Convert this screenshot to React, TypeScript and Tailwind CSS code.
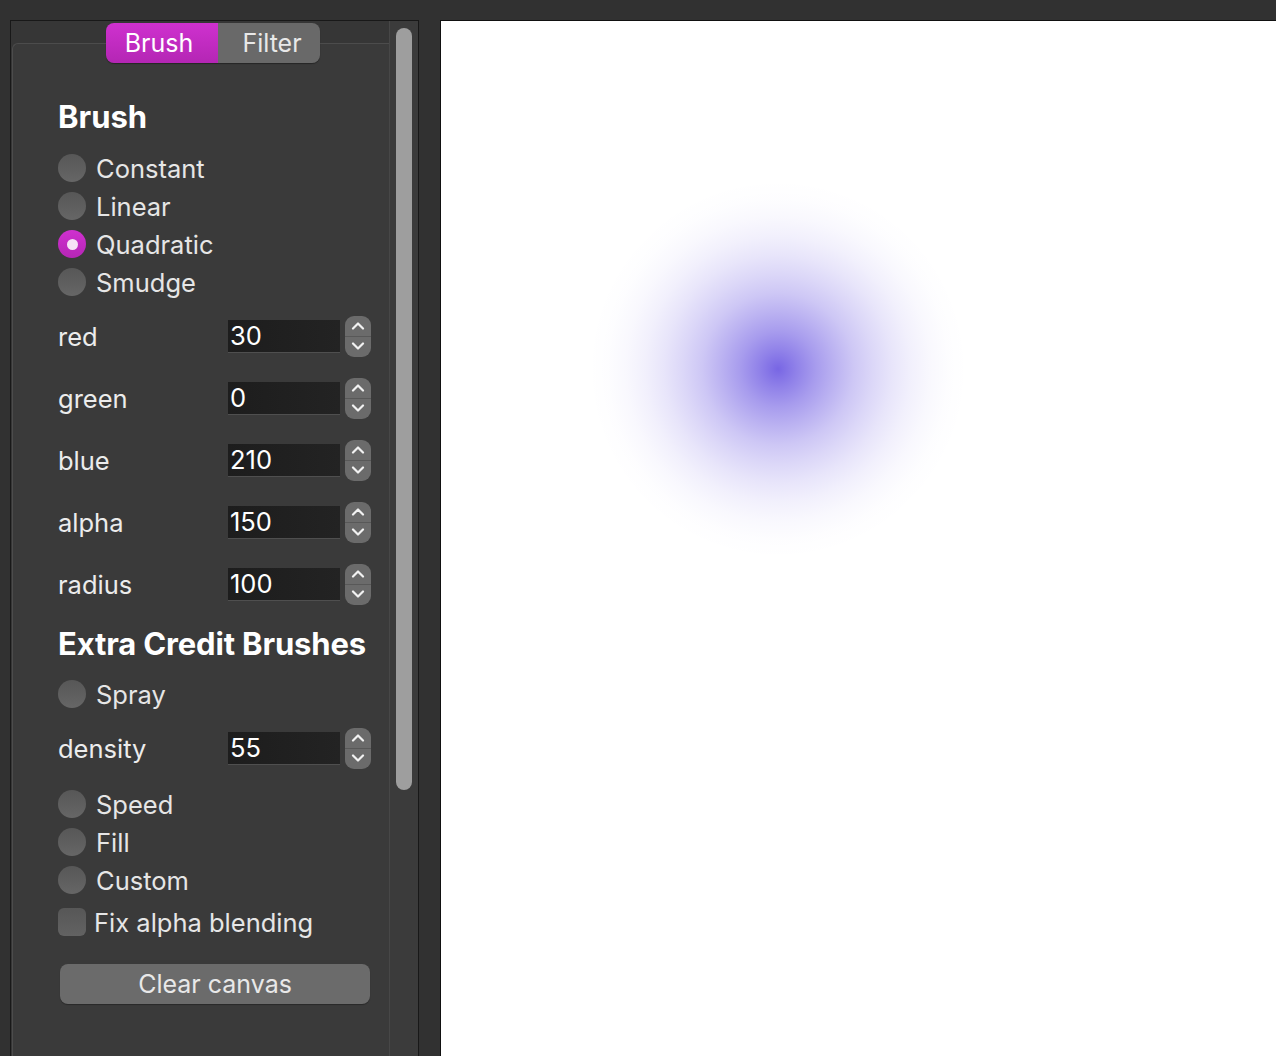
import React from 'react';

const ChevronUp = () => (
  <svg width="14" height="9" viewBox="0 0 14 9" fill="none">
    <path d="M2 7.5L7 2.5l5 5" stroke="#f2f2f2" strokeWidth="2.2" strokeLinecap="round" strokeLinejoin="round" />
  </svg>
);

const ChevronDown = () => (
  <svg width="14" height="9" viewBox="0 0 14 9" fill="none">
    <path d="M2 1.5L7 6.5l5-5" stroke="#f2f2f2" strokeWidth="2.2" strokeLinecap="round" strokeLinejoin="round" />
  </svg>
);

const Radio = ({ label, checked = false }: { label: string; checked?: boolean }) => (
  <div className="flex h-[38px] items-center gap-[10px]">
    {checked ? (
      <span className="flex h-[28px] w-[28px] items-center justify-center rounded-full bg-gradient-to-b from-[#cf30cf] to-[#b526b5]">
        <span className="h-[11px] w-[11px] rounded-full bg-[#f6e2f6]" />
      </span>
    ) : (
      <span className="h-[28px] w-[28px] rounded-full bg-gradient-to-b from-[#575757] to-[#666666]" />
    )}
    <span className="pt-[2px] text-[25.5px] text-[#e6e6e6]">{label}</span>
  </div>
);

const SpinRow = ({ label, value }: { label: string; value: string }) => (
  <div className="flex h-[42px] items-center">
    <span className="w-[170px] pt-[2px] text-[25.5px] text-[#ececec]">{label}</span>
    <div className="flex h-[33px] w-[112px] items-center border-b border-[#4f4f4f] bg-gradient-to-r from-[#1d1d1d] to-[#232323] pl-[2px] pt-[2px] text-[25.5px] text-white">
      {value}
    </div>
    <div className="ml-[5px] flex h-[41px] w-[26px] flex-col overflow-hidden rounded-[9px] bg-[#6b6b6b]">
      <div className="flex flex-1 items-center justify-center border-b border-[#585858]">
        <ChevronUp />
      </div>
      <div className="flex flex-1 items-center justify-center">
        <ChevronDown />
      </div>
    </div>
  </div>
);

const App = () => {
  return (
    <div className="flex h-[1056px] w-full overflow-hidden bg-[#313131] pt-[20px] font-['Inter','Noto_Sans',sans-serif]">
      {/* side panel */}
      <div className="relative ml-[10px] flex h-[1036px] w-[409px] border-x border-t border-[#181818] bg-[#363636]">
        <div className="absolute left-[95px] top-[2px] z-10 flex h-[40px] overflow-hidden rounded-[8px] text-[25px] shadow-[0_1px_1px_rgba(0,0,0,0.35)]">
          <div className="flex w-[112px] items-center justify-center bg-gradient-to-b from-[#cf31cf] to-[#b426b4] pr-[6px] pt-[1px] text-white">
            Brush
          </div>
          <div className="flex w-[102px] items-center justify-center bg-[#696969] pl-[6px] pt-[1px] text-[#e8e8e8]">
            Filter
          </div>
        </div>

        <div className="flex flex-1 flex-col pl-[1px] pt-[22px]">
          <div className="flex flex-1 flex-col rounded-tl-[6px] border-l border-t border-[#4c4c4c] bg-[#3a3a3a] pl-[45px] pt-[55px]">
            <h2 className="h-[36px] text-[31px] font-bold leading-[36px] text-white">Brush</h2>
            <div className="mt-[14px] flex flex-col">
              <Radio label="Constant" />
              <Radio label="Linear" />
              <Radio label="Quadratic" checked />
              <Radio label="Smudge" />
            </div>
            <div className="mt-[14px] flex flex-col gap-[20px]">
              <SpinRow label="red" value="30" />
              <SpinRow label="green" value="0" />
              <SpinRow label="blue" value="210" />
              <SpinRow label="alpha" value="150" />
              <SpinRow label="radius" value="100" />
            </div>
            <h2 className="mt-[21px] h-[36px] whitespace-nowrap text-[31px] font-bold leading-[36px] tracking-[-0.15px] text-white">
              Extra Credit Brushes
            </h2>
            <div className="mt-[13px]">
              <Radio label="Spray" />
            </div>
            <div className="mt-[14px]">
              <SpinRow label="density" value="55" />
            </div>
            <div className="mt-[16px] flex flex-col">
              <Radio label="Speed" />
              <Radio label="Fill" />
              <Radio label="Custom" />
            </div>
            <div className="mt-[4px] flex h-[38px] items-center gap-[8px]">
              <span className="h-[28px] w-[28px] rounded-[6px] bg-gradient-to-b from-[#575757] to-[#626262]" />
              <span className="pt-[2px] text-[25.5px] text-[#e6e6e6]">Fix alpha blending</span>
            </div>
            <button className="ml-[2px] mt-[23px] flex h-[40px] w-[310px] items-center justify-center rounded-[8px] bg-[#6b6b6b] pt-[1px] text-[25px] text-[#e8e8e8] shadow-[0_1px_1px_rgba(0,0,0,0.3)]">
              Clear canvas
            </button>
          </div>
        </div>

        {/* scroll column */}
        <div className="w-[29px] border-l border-[#474747] bg-[#3b3b3b] pl-[6px] pt-[7px]">
          <div className="h-[762px] w-[16px] rounded-full bg-[#9e9e9e]" />
        </div>
      </div>

      {/* canvas */}
      <div className="relative ml-[21px] h-[1036px] flex-1 border-l border-t border-[#111111] bg-white">
        <div className="absolute left-[147px] top-[158px] h-[380px] w-[380px] bg-[radial-gradient(circle_closest-side,rgba(30,0,210,0.6)_0%,rgba(30,0,210,0.49)_10%,rgba(30,0,210,0.39)_20%,rgba(30,0,210,0.3)_30%,rgba(30,0,210,0.22)_40%,rgba(30,0,210,0.155)_50%,rgba(30,0,210,0.1)_60%,rgba(30,0,210,0.057)_70%,rgba(30,0,210,0.026)_80%,rgba(30,0,210,0.007)_90%,rgba(30,0,210,0)_100%)]" />
      </div>
    </div>
  );
};

export default App;
